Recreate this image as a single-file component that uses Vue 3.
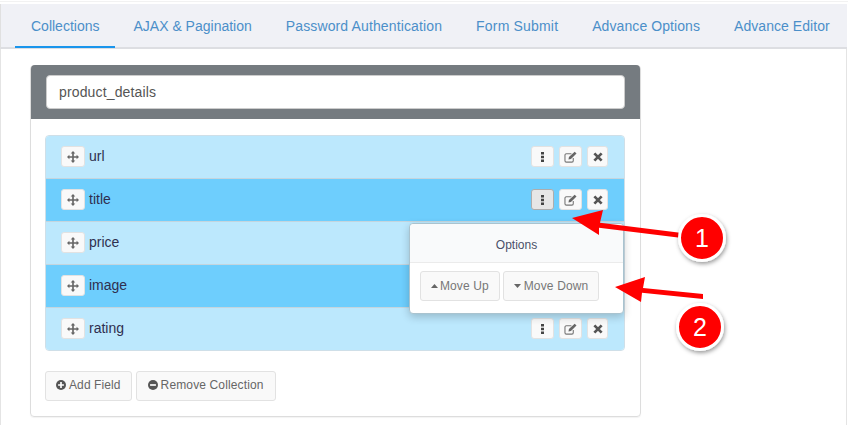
<script setup>
const tabs = [
  { label: 'Collections', spacing: 0 },
  { label: 'AJAX & Pagination', spacing: 0 },
  { label: 'Password Authentication', spacing: 0.13 },
  { label: 'Form Submit', spacing: 0.18 },
  { label: 'Advance Options', spacing: 0.08 },
  { label: 'Advance Editor', spacing: 0.05 }
]
const fields = [
  { name: 'url', dark: false },
  { name: 'title', dark: true, active: true },
  { name: 'price', dark: false },
  { name: 'image', dark: true },
  { name: 'rating', dark: false }
]
</script>

<template>
  <div class="page">
    <div class="topline"></div>
    <nav class="tabs">
      <a
        v-for="(t, i) in tabs"
        :key="t.label"
        class="tab"
        :class="{ current: i === 0 }"
        :style="{ letterSpacing: t.spacing + 'px' }"
      >{{ t.label }}</a>
    </nav>
    <section class="content">
      <div class="panel">
        <div class="heading">
          <div class="name">product_details</div>
        </div>
        <div class="body">
          <ul class="list">
            <li v-for="f in fields" :key="f.name" class="row" :class="{ dark: f.dark }">
              <button class="btn handle">
                <svg width="12" height="12" viewBox="0 0 13 13"><path fill="#666" d="M6.500 0 9 2.600H7.400v3h3V4L13 6.500 10.400 9V7.400h-3v3H9L6.500 13 4 10.400h1.600v-3h-3V9L0 6.500 2.600 4v1.600h3v-3H4z"/></svg>
              </button>
              <span class="label">{{ f.name }}</span>
              <span class="actions" v-if="f.name !== 'price' && f.name !== 'image'">
                <button class="btn act" :class="{ pressed: f.active }">
                  <svg width="3" height="10" viewBox="0 0 3 10"><path fill="#444" d="M0 0h3v2.500H0zM0 3.750h3v2.500H0zM0 7.500h3V10H0z"/></svg>
                </button>
                <button class="btn act">
                  <svg width="13" height="12" viewBox="0 0 14 13"><path fill="none" stroke="#777" stroke-width="1.200" d="M10 7.500V10.500a1.500 1.500 0 0 1-1.500 1.500H2.500A1.500 1.500 0 0 1 1 10.500V4.500A1.500 1.500 0 0 1 2.500 3H8"/><path fill="#666" d="M11.500.8 13.500 2.800 7.500 8.800 4.800 9.300 5.300 6.600z"/></svg>
                </button>
                <button class="btn act close">
                  <svg width="10" height="10" viewBox="0 0 11 11"><path fill="none" stroke="#555" stroke-width="3" d="M1.500 1.500l8 8M9.500 1.500l-8 8"/></svg>
                </button>
              </span>
            </li>
          </ul>
          <div class="foot">
            <button class="btn wide">
              <svg width="10" height="10" viewBox="0 0 12 12"><circle cx="6" cy="6" r="6" fill="#555"/><path fill="#fff" d="M2.500 5h7v2h-7zM5 2.500h2v7H5z"/></svg>
              Add Field
            </button>
            <button class="btn wide remove">
              <svg width="10" height="10" viewBox="0 0 12 12"><circle cx="6" cy="6" r="6" fill="#555"/><path fill="#fff" d="M2.500 5h7v2h-7z"/></svg>
              Remove Collection
            </button>
          </div>
        </div>
      </div>
    </section>

    <div class="popover">
      <div class="pop-title">Options</div>
      <div class="pop-body">
        <button class="btn pop-btn">
          <svg width="7" height="4" viewBox="0 0 7 4"><path fill="#666" d="M3.500 0 7 4H0z"/></svg>
          Move Up
        </button>
        <button class="btn pop-btn down">
          <svg width="7" height="4" viewBox="0 0 7 4"><path fill="#666" d="M0 0h7L3.500 4z"/></svg>
          Move Down
        </button>
      </div>
    </div>

    <svg class="arrows" width="848" height="425" viewBox="0 0 848 425">
      <defs>
        <filter id="sh" x="-30%" y="-30%" width="160%" height="160%">
          <feDropShadow dx="1" dy="2" stdDeviation="2" flood-color="#000" flood-opacity=".4"/>
        </filter>
      </defs>
      <path fill="#f00" d="M572 218 603 210 600 222.700 682 233 682 238 599 227.700 599 235z"/>
      <path fill="#f00" d="M615 287 645 277 643 288 703 294 703 299 642 292.700 641 302z"/>
      <circle cx="702" cy="238" r="22.500" fill="#f00" stroke="#fff" stroke-width="3" filter="url(#sh)"/>
      <circle cx="700" cy="327" r="22.500" fill="#f00" stroke="#fff" stroke-width="3" filter="url(#sh)"/>
    </svg>
    <span class="num n1">1</span>
    <span class="num n2">2</span>
  </div>
</template>

<style>
html, body { margin: 0; background: #fff; overflow: hidden; }
</style>

<style scoped>
.page {
  position: relative;
  width: 848px;
  height: 425px;
  box-sizing: border-box;
  padding-top: 1px;
  overflow: hidden;
  font-family: "Liberation Sans", Arial, sans-serif;
  font-size: 14px;
  color: #333;
  background: #fff;
}
.topline { height: 1px; margin-bottom: 2px; background: #f2f2f2; }
.tabs {
  display: flex;
  box-sizing: border-box;
  height: 45px;
  margin-right: 1px;
  padding-left: 14px;
  gap: 2px;
  background: #f0f1f6;
  border-bottom: 2px solid #dddee2;
  border-left: 1px solid #e0e0e0;
}
.tab {
  box-sizing: border-box;
  height: 44px;
  padding: 14px 16px 0;
  line-height: 16px;
  color: #4b8fc9;
  white-space: nowrap;
}
.tab.current { border-bottom: 2px solid #1a95ec; }
.content {
  box-sizing: border-box;
  height: 376px;
  margin-right: 1px;
  padding: 16px 0 0 29px;
  border-left: 1px solid #e4e4e4;
  border-right: 1px solid #e4e4e4;
}
.panel {
  box-sizing: border-box;
  width: 611px;
  height: 352px;
  border: 1px solid #ddd;
  border-radius: 4px;
  box-shadow: 0 1px 1px rgba(0,0,0,.05);
}
.heading {
  box-sizing: border-box;
  height: 54px;
  margin-top: -1px;
  padding: 10px 15px;
  background: #757b80;
  border-radius: 4px 4px 0 0;
}
.name {
  box-sizing: border-box;
  height: 34px;
  width: 579px;
  padding: 0 12px;
  line-height: 32px;
  letter-spacing: .15px;
  color: #555;
  background: #fff;
  border: 1px solid #ccc;
  border-radius: 4px;
}
.body { padding: 16px 14px 0; }
.list {
  list-style: none;
  margin: 0;
  padding: 0;
  width: 580px;
  border: 1px solid #cfdfe8;
  border-radius: 4px;
  box-sizing: border-box;
  overflow: hidden;
}
.row {
  display: flex;
  align-items: center;
  box-sizing: border-box;
  height: 43px;
  padding: 0 15px 1px;
  background: #bce8fd;
  border-bottom: 1px solid #c4d5de;
  color: #2f2f4f;
}
.row:last-child { border-bottom: 0; height: 42px; padding-bottom: 1px; }
.row.dark { background: #6ecefd; }
.label { margin-left: 4px; margin-top: -1px; }
.actions { margin-left: auto; display: flex; gap: 5px; margin-right: 1px; }
.btn {
  display: inline-flex;
  align-items: center;
  justify-content: center;
  box-sizing: border-box;
  margin: 0;
  padding: 0;
  font: inherit;
  background: #f9f9f9;
  border: 1px solid #e2e2e2;
  border-radius: 3px;
  color: #666;
}
.handle { width: 24px; height: 21px; }
.act { width: 23px; height: 21px; }
.close { width: 21px; }
.pressed { background: #e6e6e6; border-color: #adadad; }
.foot { display: flex; gap: 4px; margin-top: 20px; }
.wide { height: 30px; padding: 0 10px 2px; font-size: 12px; gap: 3px; letter-spacing: .1px; }
.remove { padding: 0 11px 2px; letter-spacing: .13px; }
.popover {
  position: absolute;
  left: 409px;
  top: 223px;
  width: 215px;
  height: 91px;
  box-sizing: border-box;
  background: #fff;
  border: 1px solid #a9c3cf;
  border-radius: 4px;
  box-shadow: 0 3px 8px rgba(0,0,0,.2);
}
.pop-title {
  box-sizing: border-box;
  height: 39px;
  line-height: 42px;
  text-align: center;
  font-size: 12px;
  color: #4a5068;
  background: #f9fafb;
  border-bottom: 1px solid #ebebeb;
  border-radius: 4px 4px 0 0;
}
.pop-body { display: flex; gap: 3px; padding: 8px 10px; }
.pop-btn { height: 30px; font-size: 12px; padding: 0 10px 1px; gap: 2px; color: #777; letter-spacing: .1px; }
.down { gap: 3px; letter-spacing: .15px; }
.arrows { position: absolute; left: 0; top: 0; pointer-events: none; }
.num {
  position: absolute;
  width: 24px;
  text-align: center;
  color: #fff;
  font-size: 25px;
  line-height: 30px;
}
.n1 { left: 690px; top: 223px; }
.n2 { left: 688px; top: 312px; }
</style>
